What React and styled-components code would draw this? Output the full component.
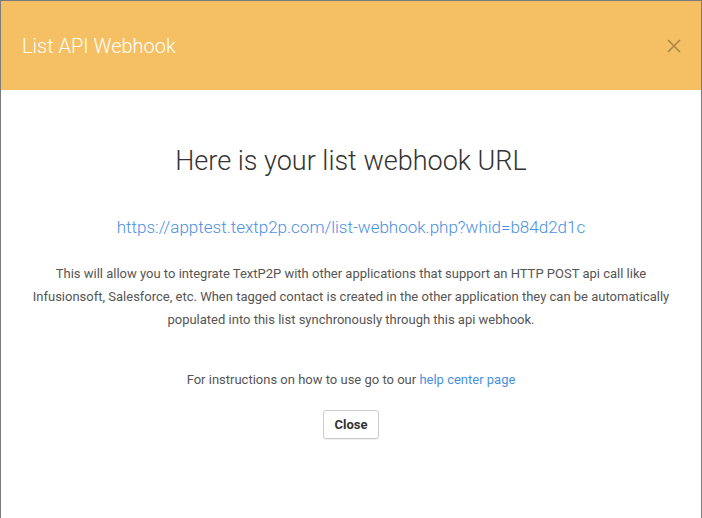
import React from "react";
import styled, { createGlobalStyle } from "styled-components";

const GlobalStyle = createGlobalStyle`
  html, body {
    margin: 0;
    padding: 0;
    background: #7b7b7b;
    font-family: Roboto, "Liberation Sans", sans-serif;
  }
`;

const Backdrop = styled.div`
  width: 702px;
  height: 518px;
  padding: 1px 1px 0 1px;
  box-sizing: border-box;
  background: #7b7b7b;
  display: flex;
`;

const Modal = styled.div`
  flex: 1;
  background: #fff;
  display: flex;
  flex-direction: column;
`;

const Header = styled.div`
  height: 89px;
  background: #f5c063;
  display: flex;
  align-items: center;
  justify-content: space-between;
  padding: 0 20px 0 21px;
  box-sizing: border-box;
`;

const Title = styled.h4`
  margin: 0;
  font-weight: 300;
  font-size: 20px;
  color: #fff;
`;

const CloseX = styled.button`
  border: 0;
  background: none;
  padding: 0;
  width: 14px;
  height: 14px;
  display: flex;
  opacity: 0.3;
  cursor: pointer;
`;

const Body = styled.div`
  display: flex;
  flex-direction: column;
  align-items: center;
  padding-top: 55px;
  text-align: center;
`;

const Heading = styled.h2`
  margin: 0;
  font-weight: 300;
  font-size: 27px;
  color: #333;
`;

const Link = styled.a`
  color: #4a90e2;
  text-decoration: none;
  font-weight: ${(p) => (p.$light ? 300 : 400)};
  font-size: ${(p) => p.$size || "inherit"};
`;

const UrlLine = styled.div`
  margin-top: 40px;
`;

const Text = styled.p`
  margin: ${(p) => p.$mt} 0 0;
  font-size: 13px;
  line-height: 23px;
  color: #555;
  max-width: 650px;
`;

const Button = styled.button`
  margin-top: 19px;
  width: 56px;
  height: 29px;
  background: #fff;
  border: 1px solid #ccc;
  border-radius: 3px;
  box-shadow: 0 1px 1px rgba(0, 0, 0, 0.06);
  font-family: Roboto, "Liberation Sans", sans-serif;
  font-weight: 700;
  font-size: 13px;
  color: #333;
  cursor: pointer;
`;

export default function App() {
  return (
    <>
      <GlobalStyle />
      <Backdrop>
        <Modal>
          <Header>
            <Title>List API Webhook</Title>
            <CloseX aria-label="close">
              <svg width="14" height="14" viewBox="0 0 14 14">
                <path d="M1 1L13 13M13 1L1 13" stroke="#000" strokeWidth="1.6" />
              </svg>
            </CloseX>
          </Header>
          <Body>
            <Heading>Here is your list webhook URL</Heading>
            <UrlLine>
              <Link $light $size="17px" href="#">
                https://apptest.textp2p.com/list-webhook.php?whid=b84d2d1c
              </Link>
            </UrlLine>
            <Text $mt="25px">
              This will allow you to integrate TextP2P with other applications that support an HTTP POST api call like
              Infusionsoft, Salesforce, etc. When tagged contact is created in the other application they can be
              automatically populated into this list synchronously through this api webhook.
            </Text>
            <Text $mt="37px">
              For instructions on how to use go to our <Link href="#">help center page</Link>
            </Text>
            <Button>Close</Button>
          </Body>
        </Modal>
      </Backdrop>
    </>
  );
}
